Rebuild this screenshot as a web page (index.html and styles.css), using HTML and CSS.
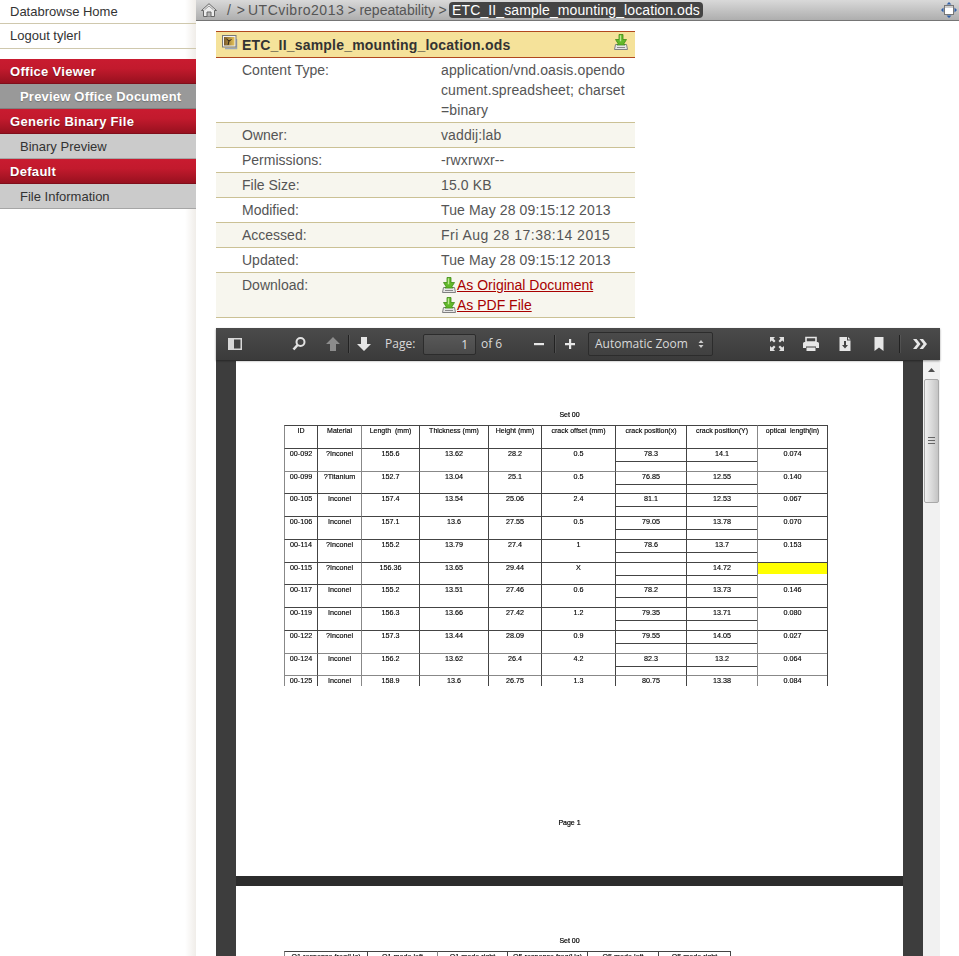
FILE: index.html
```html
<!DOCTYPE html>
<html lang="en">
<head>
<meta charset="utf-8">
<title>Databrowse</title>
<link rel="stylesheet" href="styles.css">
</head>
<body>
<svg class="defs" width="0" height="0" aria-hidden="true">
  <symbol id="dl" viewBox="0 0 14 16">
    <path d="M1.500 10.500h11l1 5H.5z" fill="#e6e6e6" stroke="#808080"/>
    <path d="M3 13.500h8" stroke="#8a8a8a"/>
    <path d="M5 .5h4v5h3.500L10 9.500l1 1.500H3l1-1.500L1.500 5.500H5z" fill="#62b82a" stroke="#3f8c14" stroke-width=".8"/>
    <path d="M5.800 1.300h1.400v6H5.800z" fill="#bde893"/>
  </symbol>
  <linearGradient id="photo" x1="0" x2="1" y1="0" y2="0">
    <stop offset="0" stop-color="#7a5a2a"/>
    <stop offset="1" stop-color="#e6c45a"/>
  </linearGradient>
</svg>
<div class="app">
  <nav class="sidebar">
    <a class="plain">Databrowse Home</a>
    <a class="plain">Logout tylerl</a>
    <div class="menu">
      <div class="menu-head">Office Viewer</div>
      <div class="menu-item active">Preview Office Document</div>
      <div class="menu-head">Generic Binary File</div>
      <div class="menu-item">Binary Preview</div>
      <div class="menu-head">Default</div>
      <div class="menu-item">File Information</div>
    </div>
  </nav>
  <main class="main">
    <header class="topbar">
      <svg class="home" width="16" height="14" viewBox="0 0 16 14"><path d="M8 .7 15.500 7.500h-2v6h-11v-6h-2z" fill="#ececec" stroke="#666"/><path d="M3.500 6.800 8 3l4.500 3.800" fill="none" stroke="#999"/><path d="M6 13.500V9h4v4.500" fill="#b5b5b5" stroke="#666"/></svg>
      <div class="crumbs"><span class="c-root">/ &gt;</span><span class="c-dir">UTCvibro2013</span><span class="c-sep">&gt;</span><span class="c-sep">repeatability</span><span class="c-sep">&gt;</span><span class="pill">ETC_II_sample_mounting_location.ods</span></div>
      <svg class="expand" width="16" height="16" viewBox="0 0 16 16"><path d="M8 0l2.500 2.500h-5zM8 16l-2.500-2.500h5zM0 8l2.500-2.500v5zM16 8l-2.500 2.500v-5z" fill="#2f5fa8"/><rect x="3.500" y="3.500" width="9" height="9" fill="#fff" stroke="#777"/><rect x="4" y="4" width="8" height="2" fill="#cfcfcf"/></svg>
    </header>
    <div class="content">
      <section class="meta">
        <div class="meta-title">
          <svg class="file-icon" width="16" height="15" viewBox="0 0 16 15"><path d="M3 13.500h11.500V4" fill="none" stroke="#9ba7b8" stroke-width="1.500"/><rect x=".5" y=".5" width="13.500" height="11.500" fill="#f2f2f2" stroke="#777"/><rect x="2" y="2" width="10.500" height="8.500" fill="url(#photo)"/><path d="M6 10l1-4 2.500-1.500M7 6 4.500 4" stroke="#2a2015" fill="none"/></svg>
          <h1>ETC_II_sample_mounting_location.ods</h1>
          <svg class="dl-big" width="14" height="16"><use href="#dl"/></svg>
        </div>
        <div class="meta-row"><span class="k">Content Type:</span><span class="v">application/vnd.oasis.opendocument.spreadsheet; charset=binary</span></div>
        <div class="meta-row"><span class="k">Owner:</span><span class="v">vaddij:lab</span></div>
        <div class="meta-row"><span class="k">Permissions:</span><span class="v">-rwxrwxr--</span></div>
        <div class="meta-row"><span class="k">File Size:</span><span class="v">15.0 KB</span></div>
        <div class="meta-row"><span class="k">Modified:</span><span class="v">Tue May 28 09:15:12 2013</span></div>
        <div class="meta-row"><span class="k">Accessed:</span><span class="v v-wide">Fri Aug 28 17:38:14 2015</span></div>
        <div class="meta-row"><span class="k">Updated:</span><span class="v">Tue May 28 09:15:12 2013</span></div>
        <div class="meta-row"><span class="k">Download:</span><span class="v">
          <span class="dl-line"><svg width="14" height="16"><use href="#dl"/></svg><a>As Original Document</a></span>
          <span class="dl-line"><svg width="14" height="16"><use href="#dl"/></svg><a>As PDF File</a></span>
        </span></div>
      </section>

      <section class="viewer">
        <div class="toolbar">
          <button class="tb"><svg width="16" height="16" viewBox="0 0 16 16"><path d="M1 2h14v12H1z" fill="#d8d8d8"/><path d="M7 3.500h6.500v9H7z" fill="#444"/></svg></button>
          <button class="tb ml-40"><svg width="16" height="16" viewBox="0 0 16 16"><circle cx="9.500" cy="6" r="4" fill="none" stroke="#e2e2e2" stroke-width="2"/><path d="M6.500 9 2.500 13.500" stroke="#e2e2e2" stroke-width="2.600"/></svg></button>
          <button class="tb ml-10"><svg width="16" height="16" viewBox="0 0 16 16"><path d="M8 1 15 8h-4v7H5V8H1z" fill="#8c8c8c"/></svg></button>
          <i class="sep ml-3"></i>
          <button class="tb ml-3"><svg width="16" height="16" viewBox="0 0 16 16"><path d="M8 15 1 8h4V1h6v7h4z" fill="#e6e6e6"/></svg></button>
          <span class="tb-label page-label">Page:</span>
          <input class="page-input" value="1" aria-label="Page">
          <span class="tb-label of-label">of 6</span>
          <button class="tb"><svg width="16" height="16" viewBox="0 0 16 16"><path d="M3 7h10v2.200H3z" fill="#e6e6e6"/></svg></button>
          <i class="sep ml-3"></i>
          <button class="tb ml-3"><svg width="16" height="16" viewBox="0 0 16 16"><path d="M7 3h2.200v4H13v2.200H9.200V13H7V9.200H3V7h4z" fill="#e6e6e6"/></svg></button>
          <div class="zoom-select"><span>Automatic Zoom</span><svg width="6" height="10" viewBox="0 0 6 10"><path d="M3 1l2.500 3h-5zM3 9 .5 6h5z" fill="#ccc"/></svg></div>
          <button class="tb ml-52"><svg width="16" height="16" viewBox="0 0 16 16"><path d="M1 1h5L4.500 2.800 6.500 5 5 6.500 2.800 4.500 1 6zM15 1v5l-1.800-1.500L11 6.500 9.500 5l2-2.200L10 1zM1 15v-5l1.800 1.500L5 9.500 6.500 11l-2 2.200L6 15zM15 15h-5l1.500-1.800L9.500 11 11 9.500l2.200 2L15 10z" fill="#e0e0e0"/></svg></button>
          <button class="tb ml-10"><svg width="18" height="16" viewBox="0 0 18 16"><path d="M4 1.500h10V6H4z" fill="none" stroke="#e6e6e6" stroke-width="1.600"/><path d="M2.500 6h13A1.500 1.500 0 0 1 17 7.500V12h-3v-1.500H4V12H1V7.500A1.500 1.500 0 0 1 2.500 6z" fill="#e6e6e6"/><path d="M4.500 11.500h9V15h-9z" fill="#e6e6e6"/></svg></button>
          <button class="tb ml-10"><svg width="16" height="16" viewBox="0 0 16 16"><path d="M2.500 1H10v3.500h3.500V15h-11z" fill="#e6e6e6"/><path d="M11 1l2.500 2.500H11z" fill="#e6e6e6"/><path d="M7 5h2v4h2l-3 3.500L5 9h2z" fill="#444"/></svg></button>
          <button class="tb ml-10"><svg width="16" height="16" viewBox="0 0 16 16"><path d="M3.500 1h9v14L8 11.500 3.500 15z" fill="#e6e6e6"/></svg></button>
          <i class="sep ml-8"></i>
          <button class="tb ml-8"><svg width="16" height="16" viewBox="0 0 16 16"><path d="M1 3h3.500l4 5-4 5H1l4-5zM7.500 3H11l4 5-4 5H7.500l4-5z" fill="#e6e6e6"/></svg></button>
        </div>
        <div class="viewer-body">
          <div class="pages">
            <article class="page page-one">
              <div class="pdf-title">Set 00</div>
              <div class="sheet">
                <div class="tr head"><span>ID</span><span>Material</span><span>Length&nbsp; (mm)</span><span>Thickness (mm)</span><span>Height (mm)</span><span>crack offset (mm)</span><span>crack position(x)</span><span>crack position(Y)</span><span>optical&nbsp; length(in)</span></div>
                <div class="tr"><span>00-092</span><span>?Inconel</span><span>155.6</span><span>13.62</span><span>28.2</span><span>0.5</span><span class="split">78.3</span><span class="split">14.1</span><span>0.074</span></div>
                <div class="tr soft"><span>00-099</span><span>?Titanium</span><span>152.7</span><span>13.04</span><span>25.1</span><span>0.5</span><span class="split">76.85</span><span class="split">12.55</span><span>0.140</span></div>
                <div class="tr"><span>00-105</span><span>Inconel</span><span>157.4</span><span>13.54</span><span>25.06</span><span>2.4</span><span class="split">81.1</span><span class="split">12.53</span><span>0.067</span></div>
                <div class="tr"><span>00-106</span><span>Inconel</span><span>157.1</span><span>13.6</span><span>27.55</span><span>0.5</span><span class="split">79.05</span><span class="split">13.78</span><span>0.070</span></div>
                <div class="tr"><span>00-114</span><span>?Inconel</span><span>155.2</span><span>13.79</span><span>27.4</span><span>1</span><span class="split">78.6</span><span class="split">13.7</span><span>0.153</span></div>
                <div class="tr"><span>00-115</span><span>?Inconel</span><span>156.36</span><span>13.65</span><span>29.44</span><span>X</span><span class="split">&nbsp;</span><span class="split">14.72</span><span><b class="mark"></b></span></div>
                <div class="tr"><span>00-117</span><span>Inconel</span><span>155.2</span><span>13.51</span><span>27.46</span><span>0.6</span><span class="split">78.2</span><span class="split">13.73</span><span>0.146</span></div>
                <div class="tr"><span>00-119</span><span>Inconel</span><span>156.3</span><span>13.66</span><span>27.42</span><span>1.2</span><span class="split">79.35</span><span class="split">13.71</span><span>0.080</span></div>
                <div class="tr"><span>00-122</span><span>?Inconel</span><span>157.3</span><span>13.44</span><span>28.09</span><span>0.9</span><span class="split">79.55</span><span class="split">14.05</span><span>0.027</span></div>
                <div class="tr soft"><span>00-124</span><span>Inconel</span><span>156.2</span><span>13.62</span><span>26.4</span><span>4.2</span><span class="split">82.3</span><span class="split">13.2</span><span>0.064</span></div>
                <div class="tr soft"><span>00-125</span><span>Inconel</span><span>158.9</span><span>13.6</span><span>26.75</span><span>1.3</span><span class="split">80.75</span><span class="split">13.38</span><span>0.084</span></div>
              </div>
              <div class="pdf-foot">Page 1</div>
            </article>
            <article class="page page-two">
              <div class="pdf-title">Set 00</div>
              <div class="sheet sheet-two">
                <div class="tr"><span>Q1 response freq(Hz)</span><span>Q1 mode left</span><span>Q1 mode right</span><span>Q5 response freq(Hz)</span><span>Q5 mode left</span><span>Q5 mode right</span></div>
              </div>
            </article>
          </div>
          <div class="scrollbar">
            <div class="sb-btn"><svg width="7" height="4" viewBox="0 0 7 4"><path d="M3.500 0 7 4H0z" fill="#505050"/></svg></div>
            <div class="sb-thumb"><i></i><i></i><i></i></div>
          </div>
        </div>
      </section>
    </div>
  </main>
</div>
</body>
</html>
```
FILE: styles.css
```css
* { box-sizing: border-box; }
html, body { height: 100%; }
body {
  margin: 0;
  overflow: hidden;
  background: #fff;
  color: #333;
  font: 14px/20px "Liberation Sans", Arial, sans-serif;
}
.defs { position: absolute; }
.app { display: flex; height: 956px; overflow: hidden; }

/* Sidebar */
.sidebar {
  flex: 0 0 196px;
  font-size: 13px;
  background: linear-gradient(90deg, #fff 185px, #f0ede9 196px);
}
.plain {
  display: block;
  height: 25px;
  padding: 2px 10px 0;
  line-height: 20px;
  color: #333;
  border-bottom: 1px solid #cfc8ad;
}
.plain:first-child { height: 24px; }
.menu { margin-top: 10px; }
.menu-head {
  height: 25px;
  padding: 3px 10px 0;
  color: #fff;
  font-weight: 700;
  letter-spacing: .3px;
  line-height: 20px;
  background: linear-gradient(#c91b30, #c21a2d 40%, #98111f);
  border-bottom: 1px solid #7f0e1a;
  text-shadow: 0 1px 1px rgba(0, 0, 0, .3);
}
.menu-item {
  height: 25px;
  padding: 3px 0 0 20px;
  line-height: 20px;
  color: #333;
  white-space: nowrap;
  background: #cbcbcb;
  border-bottom: 1px solid #a6a6a6;
}
.menu-item.active {
  color: #fff;
  font-weight: 700;
  letter-spacing: .2px;
  background: #999;
  border-bottom-color: #808080;
  text-shadow: 0 1px 1px rgba(0, 0, 0, .25);
}

/* Main column */
.main { flex: 1; min-width: 0; display: flex; flex-direction: column; }
.topbar {
  flex: 0 0 21px;
  display: flex;
  align-items: center;
  padding: 0 2px 1px 5px;
  background: linear-gradient(#d9d9d9, #aeaeae);
  border-bottom: 1px solid #757575;
}
.home { flex: none; }
.crumbs { display: flex; align-items: center; margin-left: 10px; flex: 1; color: #555; line-height: 18px; white-space: nowrap; }
.c-root { margin-right: 3px; word-spacing: 2px; }
.c-dir { letter-spacing: .5px; }
.c-sep { margin-left: 3.5px; }
.pill {
  margin-left: 2.5px;
  height: 16px;
  padding: 0 3px;
  line-height: 16px;
  letter-spacing: .1px;
  background: #444;
  color: #fff;
  border-radius: 4px;
}
.expand { flex: none; }

.content { padding: 10px 0 0 20px; flex: 1; min-height: 0; display: flex; flex-direction: column; }

/* File info */
.meta { width: 419px; color: #555; }
.meta-title {
  height: 27px;
  display: flex;
  align-items: center;
  padding: 0 7px 0 6px;
  background: #f5e29a;
  border-top: 1px solid #b0481e;
  border-bottom: 1px solid #b0481e;
}
.file-icon { flex: none; margin-top: -4px; }
.meta-title h1 { flex: 1; margin: 0 0 0 4px; font-size: 14px; font-weight: 700; letter-spacing: .2px; color: #333; line-height: 20px; }
.dl-big { margin-top: -5px; }
.meta-row {
  display: flex;
  padding: 2px 0 2px 26px;
  border-bottom: 1px solid #cbc195;
  line-height: 20px;
}
.meta-row:nth-child(odd) { background: #f7f6ee; }
.meta-row:nth-child(2) { background: #fff; }
.k { flex: 0 0 199px; }
.v { flex: 0 0 186px; word-break: break-all; letter-spacing: .12px; }
.v-wide { letter-spacing: .5px; }
.dl-line { display: flex; align-items: center; height: 20px; letter-spacing: 0; }
.dl-line svg { flex: none; margin-left: 1px; margin-right: 1px; }
.dl-line a { color: #a80000; text-decoration: underline; word-break: normal; white-space: nowrap; }

/* PDF viewer */
.viewer { width: 724px; margin-top: 10px; flex: 1; min-height: 0; display: flex; flex-direction: column; background: #3d3d3d; }
.toolbar {
  flex: 0 0 32px;
  display: flex;
  align-items: center;
  padding-left: 7px;
  background: linear-gradient(#4b4b4b, #3b3b3b);
  box-shadow: 0 1px 2px rgba(0, 0, 0, .4);
  position: relative;
  color: #d9d9d9;
  font: 12px/16px "Open Sans", sans-serif;
}
.tb { flex: none; width: 24px; height: 24px; padding: 0; display: flex; align-items: center; justify-content: center; background: none; border: 0; }
.sep { flex: none; width: 1px; height: 18px; background: #222; box-shadow: 1px 0 0 rgba(255, 255, 255, .08); }
.ml-3 { margin-left: 3px; }
.ml-8 { margin-left: 8px; }
.ml-10 { margin-left: 10px; }
.ml-40 { margin-left: 40px; }
.ml-52 { margin-left: 52px; }
.tb-label { flex: none; }
.page-label { width: 38px; margin-left: 9px; }
.of-label { width: 46px; margin-left: 5px; }
.page-input {
  flex: none;
  width: 53px;
  height: 21px;
  padding: 0 7px;
  text-align: right;
  color: #e0e0e0;
  font: 12px "Open Sans", sans-serif;
  background: linear-gradient(#585858, #4a4a4a);
  border: 1px solid #2c2c2c;
  border-radius: 2px;
}
.zoom-select {
  flex: none;
  width: 125px;
  height: 24px;
  margin-left: 6px;
  padding: 0 6px;
  display: flex;
  align-items: center;
  justify-content: space-between;
  background: linear-gradient(#4a4a4a, #404040);
  border: 1px solid #2c2c2c;
  border-radius: 2px;
}
.zoom-select svg { margin-right: 2px; }

.viewer-body { flex: 1; min-height: 0; display: flex; overflow: hidden; }
.pages { flex: 1; padding: 1px 20px 0; display: flex; flex-direction: column; gap: 10px; }
.scrollbar { flex: 0 0 17px; background: #f1f1f1; padding: 0 1px; }
.sb-btn { height: 19px; display: flex; align-items: center; justify-content: center; }
.sb-thumb {
  height: 124px;
  display: flex;
  flex-direction: column;
  align-items: center;
  justify-content: center;
  gap: 1px;
  background: linear-gradient(90deg, #f0f0f0, #d6d6d6 60%, #c4c4c4);
  border: 1px solid #a8a8a8;
  border-radius: 2px;
}
.sb-thumb i { width: 7px; height: 1px; background: #666; margin-bottom: 1px; }

.page { flex: none; background: #fff; color: #000; font-size: 7.2px; line-height: 10px; }
.page-one { height: 515px; padding-top: 48px; box-shadow: 0 10px 0 #2c2c2c; }
.page-two { height: 200px; padding-top: 49px; }
.pdf-title { height: 16px; padding-top: 1px; text-align: center; font-size: 7px; filter: blur(.25px); -webkit-text-stroke: .2px #000; }
.sheet { margin-left: 48px; width: 544px; height: 261px; overflow: hidden; filter: blur(.25px); border-right: 1px solid #444; -webkit-text-stroke: .15px #000; }
.tr { display: grid; grid-template-columns: 33px 44px 58px 69px 53px 74px 71px 71px 70px; height: 22.75px; }
.tr.head { font-size: 7px; }
.tr > span { text-align: center; border-left: 1px solid #444; border-top: 1px solid #444; line-height: 10px; }
.tr > span:nth-child(1), .tr > span:nth-child(3), .tr > span:nth-child(9) { border-left-color: #888; }
.tr.soft > span { border-top-color: #888; }
.tr > .split { position: relative; }
.tr > .split::after { content: ""; position: absolute; left: 0; right: 0; top: 12px; border-top: 1px solid #444; }
.mark { display: block; height: 11.500px; background: #ff0; }
.pdf-foot { margin-top: 132px; text-align: center; font-size: 7px; filter: blur(.25px); -webkit-text-stroke: .2px #000; }
.sheet-two { width: 447px; height: 20px; }
.sheet-two .tr { grid-template-columns: 83px 70px 70px 80px 71px 72px; }
```
